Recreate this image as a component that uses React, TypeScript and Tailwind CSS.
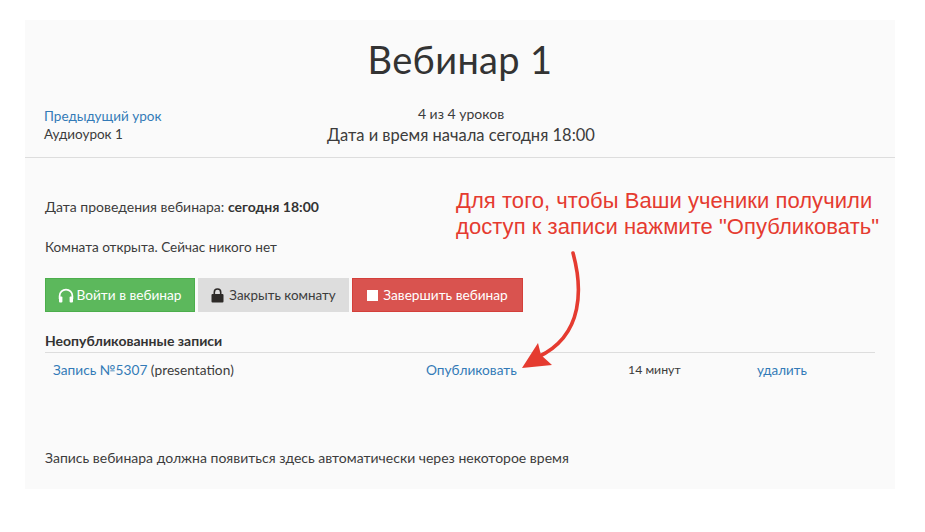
import React from "react";

function Headphones() {
  return (
    <svg width="16" height="15" viewBox="0 0 16 15" className="shrink-0">
      <path d="M1.6 11V8a6.4 6.4 0 0 1 12.8 0v3" fill="none" stroke="white" strokeWidth="1.7" />
      <rect x="1" y="8.5" width="3.4" height="6" rx="1" fill="white" />
      <rect x="11.6" y="8.5" width="3.4" height="6" rx="1" fill="white" />
    </svg>
  );
}

function Lock() {
  return (
    <svg width="13" height="15" viewBox="0 0 13 15" className="shrink-0">
      <path d="M3.3 7V4.2a3.2 3.2 0 0 1 6.4 0V7" fill="none" stroke="#2d2a28" strokeWidth="1.6" />
      <rect x="0.5" y="6" width="12" height="8.6" rx="1" fill="#2d2a28" />
    </svg>
  );
}

export default function App() {
  return (
    <div className="relative h-[532px] w-[925px] overflow-hidden bg-white pt-[20px] pl-[25px] font-['Lato','Open_Sans',sans-serif] text-[14px] text-[#3c3c3c]">
      <div className="h-[469px] w-[870px] bg-[#fafafa]">
        <h1 className="pt-[17px] text-center text-[38px] leading-[44px] font-normal tracking-[0.35px] text-[#333]">Вебинар 1</h1>
        <div className="mt-[23px] flex h-[54px] border-b border-[#dddddd]">
          <div className="w-[280px] pt-[3px] pl-[19px] text-[13.5px] leading-[18px]">
            <a className="block text-[#337ab7]">Предыдущий урок</a>
            <div>Аудиоурок 1</div>
          </div>
          <div className="w-[312px] text-center">
            <div className="text-[14px] leading-[19px]">4 из 4 уроков</div>
            <div className="pt-[1px] text-[16.5px] leading-[22px]">Дата и время начала сегодня 18:00</div>
          </div>
        </div>
        <div className="px-[20px]">
          <p className="pt-[39px] leading-[20px]">Дата проведения вебинара: <b className="text-[#333]">сегодня 18:00</b></p>
          <p className="pt-[20px] text-[13.6px] leading-[20px]">Комната открыта. Сейчас никого нет</p>
          <div className="mt-[21px] flex gap-[3px] text-[13.7px]">
            <button className="flex h-[34px] w-[150px] items-center justify-center gap-[2px] border border-[#4cae4c] bg-[#5cb85c] text-white">
              <Headphones />Войти в вебинар
            </button>
            <button className="flex h-[34px] w-[151px] items-center justify-center gap-[5px] bg-[#dddddd] text-[13.4px] text-[#3c3c3c]">
              <Lock />Закрыть комнату
            </button>
            <button className="flex h-[34px] w-[171px] items-center justify-center gap-[5px] border border-[#d43f3a] bg-[#d9534f] text-white">
              <span className="size-[11px] bg-white" />Завершить вебинар
            </button>
          </div>
          <div className="mt-[19px] w-[830px] border-b border-[#dddddd] pb-[1px] leading-[20px] font-bold text-[#333]">Неопубликованные записи</div>
          <div className="flex h-[35px] items-center pl-[8px] text-[13.7px]">
            <div className="w-[373px]"><a className="text-[#337ab7]">Запись №5307</a> (presentation)</div>
            <a className="w-[202px] text-[#337ab7]">Опубликовать</a>
            <div className="w-[129px] text-[12.3px]">14 минут</div>
            <a className="text-[13.4px] text-[#337ab7]">удалить</a>
          </div>
          <p className="mt-[60px] leading-[20px]">Запись вебинара должна появиться здесь автоматически через некоторое время</p>
        </div>
      </div>
      <div className="absolute top-[188px] left-[456px] font-['Liberation_Sans',sans-serif] text-[22px] leading-[26px] tracking-[0.05px] whitespace-nowrap text-[#e53b30]">
        Для того, чтобы Ваши ученики получили<br />доступ к записи нажмите "Опубликовать"
      </div>
      <svg className="absolute top-[250px] left-[515px]" width="75" height="125" viewBox="0 0 75 125">
        <path d="M58 3 C67 36 70 85 23 107" fill="none" stroke="#e53b30" strokeWidth="3.6" strokeLinecap="round" />
        <path d="M7 118 L23 93 L26 105 L37 115 Z" fill="#e53b30" />
      </svg>
    </div>
  );
}
